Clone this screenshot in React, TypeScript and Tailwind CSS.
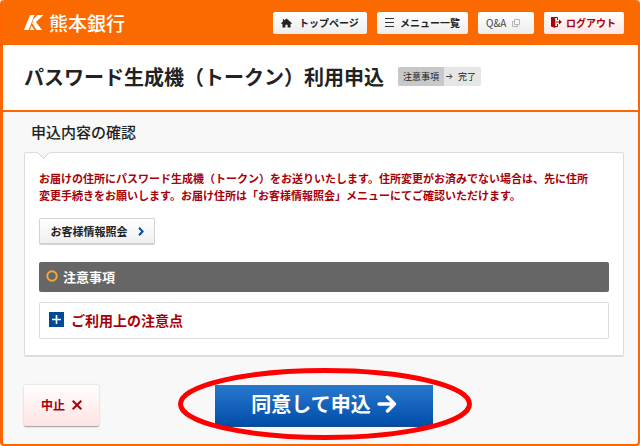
import React from "react";

function BankMark() {
  return (
    <svg width="20" height="15" viewBox="0 0 20 15" fill="#fff" aria-hidden="true">
      <path d="M6 0H10.6L4.6 15H0Z" />
      <path d="M13.2 0H19.5L12 7L18 15H12.6L8.2 8.4L9.4 4.6Z" />
      <path d="M7.6 10.6L10.4 15H5.8Z" />
    </svg>
  );
}

function HomeIcon() {
  return (
    <svg width="11" height="10" viewBox="0 0 12 10" aria-hidden="true">
      <path d="M6 0L12 5.4L11.2 6.2L10.4 5.6V10H7.2V6.8H4.8V10H1.6V5.6L0.8 6.2L0 5.4L2 3.6V1H3.4V2.3Z" fill="#222" />
    </svg>
  );
}

function MenuIcon() {
  return (
    <svg width="9" height="9" viewBox="0 0 9 9" aria-hidden="true">
      <path d="M0 0.5H9M0 4.5H9M0 8.5H9" stroke="#333" strokeWidth="1" />
    </svg>
  );
}

function WindowIcon() {
  return (
    <svg width="8" height="8" viewBox="0 0 8 8" fill="none" stroke="#b4b4b4" aria-hidden="true">
      <path d="M2.5 0.5H7.5V5.5H2.5Z" />
      <path d="M2 2.5H0.5V7.5H5.5V6" />
    </svg>
  );
}

function LogoutIcon() {
  return (
    <svg width="11" height="11" viewBox="0 0 11 11" aria-hidden="true">
      <path d="M0 0L4.4 1.6V11L0 9.4Z" fill="#a80008" />
      <path d="M0 0.5H6.5V3M6.5 7V9.5H4" fill="none" stroke="#a80008" />
      <path d="M5 4.4H8V2.4L11 5L8 7.6V5.6H5Z" fill="#a80008" />
    </svg>
  );
}

const navButton =
  "flex h-[22px] items-center rounded-xs bg-linear-to-b from-white to-[#ededed] text-[10px] leading-none whitespace-nowrap";

export default function App() {
  return (
    <div className="bg-white font-['Noto_Sans_CJK_JP',sans-serif] text-[#222]">
      <div className="flex min-h-screen flex-col overflow-hidden rounded-sm border-r-2 border-b-2 border-l-3 border-[#ff6600] bg-[#f8f8f8]">
        <header className="flex h-[45px] shrink-0 items-center bg-[#fb6a00] pr-3.5 pl-[21px]">
          <a href="#top" className="flex items-center gap-[5px] text-[19px] leading-none font-medium whitespace-nowrap text-white">
            <BankMark />
            熊本銀行
          </a>
          <nav className="ml-auto flex gap-2.5">
            <button type="button" className={`${navButton} w-[94px] gap-[7px] pl-2 font-bold`}>
              <HomeIcon />
              トップページ
            </button>
            <button type="button" className={`${navButton} w-[91px] gap-1.5 pl-2 font-bold`}>
              <MenuIcon />
              メニュー一覧
            </button>
            <button type="button" className={`${navButton} w-14 gap-1.5 pl-2 text-[#444]`}>
              Q&amp;A
              <WindowIcon />
            </button>
            <button type="button" className={`${navButton} w-20 gap-1 to-[#ffe6e6] pl-[7px] font-bold text-[#a80008]`}>
              <LogoutIcon />
              ログアウト
            </button>
          </nav>
        </header>

        <div className="flex h-[67px] shrink-0 items-center gap-3.5 border-b-2 border-[#ff6600] bg-white pb-0.5 pl-[21px]">
          <h1 className="text-xl leading-none font-bold whitespace-nowrap">パスワード生成機（トークン）利用申込</h1>
          <ol className="flex h-[19px] items-center overflow-hidden rounded-xs bg-[#e6e6e6] text-[9px] leading-none whitespace-nowrap">
            <li className="flex h-full items-center bg-[#c8c8c8] px-[5px]">注意事項</li>
            <li className="flex items-center gap-[5px] pr-[5px] pl-0.5">
              <svg width="7" height="7" viewBox="0 0 7 7" fill="none" stroke="#444" aria-hidden="true">
                <path d="M0 3.5H6M3.5 1L6 3.5L3.5 6" />
              </svg>
              完了
            </li>
          </ol>
        </div>

        <main className="pr-3.5 pl-[21px]">
          <h2 className="flex h-10 items-center pb-0.5 pl-[7px] text-[15px] leading-none font-medium">申込内容の確認</h2>

          <section className="relative rounded-xs border border-b-2 border-[#dcdcdc] bg-white px-3.5 pt-[17px] pb-4">
            <svg className="absolute -top-px left-3" width="13" height="8" viewBox="0 0 13 8" aria-hidden="true">
              <path d="M0 0H13L6.5 6.5Z" fill="#f8f8f8" />
              <path d="M0.5 0.5L6.5 6.5L12.5 0.5" fill="none" stroke="#d0d0d0" />
            </svg>
            <p className="text-[11px] leading-[17px] font-bold text-[#a80008]">
              お届けの住所にパスワード生成機（トークン）をお送りいたします。住所変更がお済みでない場合は、先に住所
              <br />
              変更手続きをお願いします。お届け住所は「お客様情報照会」メニューにてご確認いただけます。
            </p>
            <button
              type="button"
              className="mt-3.5 flex h-[27px] w-[116px] items-center justify-center gap-2.5 rounded-xs border border-b-2 border-[#d2d2d2] bg-linear-to-b from-white to-[#f0f0f0] text-[11px] leading-none font-bold whitespace-nowrap"
            >
              お客様情報照会
              <svg width="6" height="9" viewBox="0 0 6 9" fill="none" stroke="#0b4a9c" strokeWidth="2" aria-hidden="true">
                <path d="M1 0.8L4.6 4.5L1 8.2" />
              </svg>
            </button>
            <h3 className="mt-[17px] flex h-[30px] items-center gap-[5px] rounded-xs bg-[#666] pb-0.5 pl-[7px] text-[13px] leading-none font-bold text-white">
              <svg width="12" height="12" viewBox="0 0 12 12" fill="none" stroke="#f6a83c" strokeWidth="2" aria-hidden="true">
                <circle cx="6" cy="6" r="4.7" />
              </svg>
              注意事項
            </h3>
            <button
              type="button"
              aria-expanded="false"
              className="mt-2.5 flex h-[37px] w-full items-center gap-[7px] rounded-xs border border-[#dcdcdc] bg-white pb-0.5 pl-[9px] text-sm leading-none font-bold text-[#a80008]"
            >
              <svg width="15" height="15" viewBox="0 0 15 15" aria-hidden="true">
                <path d="M0 0H15V15H0Z" fill="#004b97" />
                <path d="M3 7.5H12M7.5 3V12" stroke="#fff" strokeWidth="1.6" />
              </svg>
              ご利用上の注意点
            </button>
          </section>

          <div className="mt-7 grid grid-cols-[1fr_auto_1fr] items-center">
            <button
              type="button"
              className="flex h-[42px] w-[75px] items-center justify-center gap-[7px] rounded-xs border-b border-[#aaa] bg-linear-to-b from-white to-[#ffe3e3] pb-0.5 text-xs leading-none font-bold text-[#a80008] shadow-[0_0_2px_#bbb]"
            >
              中止
              <svg width="10" height="10" viewBox="0 0 10 10" fill="none" stroke="#a80008" strokeWidth="2" aria-hidden="true">
                <path d="M0.7 0.7L9.3 9.3M9.3 0.7L0.7 9.3" />
              </svg>
            </button>
            <div className="relative">
              <button
                type="submit"
                className="flex h-[42px] w-[218px] items-center justify-center gap-1.5 border-b border-[#174a91] bg-linear-to-b from-[#2878d0] to-[#004da8] pb-1 text-xl leading-none font-bold text-white"
              >
                同意して申込
                <svg width="20" height="18" viewBox="0 0 20 18" fill="none" stroke="#fff" strokeWidth="3.4" strokeLinecap="round" strokeLinejoin="round" aria-hidden="true">
                  <path d="M2 9H17M10.5 2L17.5 9L10.5 16" />
                </svg>
              </button>
              <svg
                className="pointer-events-none absolute -top-[18px] -left-[38px]"
                width="296"
                height="74"
                viewBox="0 0 296 74"
                fill="none"
                stroke="#ff0000"
                strokeWidth="5"
                aria-hidden="true"
              >
                <ellipse cx="148" cy="37" rx="144.5" ry="33.5" />
              </svg>
            </div>
          </div>
        </main>
      </div>
    </div>
  );
}
